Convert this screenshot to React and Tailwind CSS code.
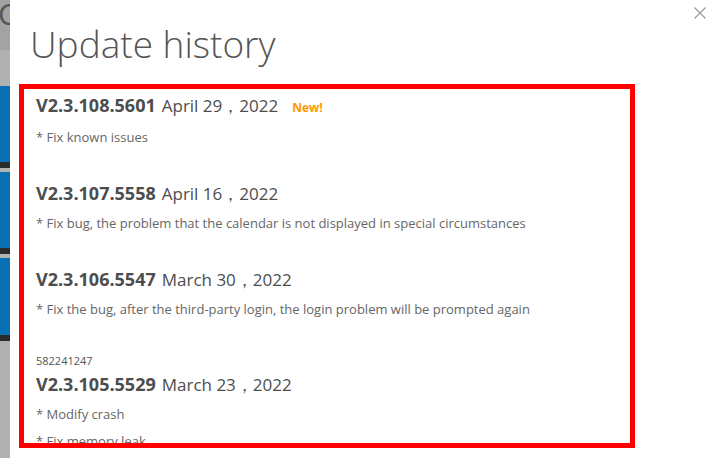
import React from 'react';

const updates = [
  {
    version: 'V2.3.108.5601',
    date: 'April 29，2022',
    isNew: true,
    notes: ['* Fix known issues'],
  },
  {
    version: 'V2.3.107.5558',
    date: 'April 16，2022',
    notes: ['* Fix bug, the problem that the calendar is not displayed in special circumstances'],
  },
  {
    version: 'V2.3.106.5547',
    date: 'March 30，2022',
    notes: ['* Fix the bug, after the third-party login, the login problem will be prompted again'],
  },
  {
    tag: '582241247',
    version: 'V2.3.105.5529',
    date: 'March 23，2022',
    notes: ['* Modify crash', '* Fix memory leak'],
  },
];

const SideStrip = () => (
  <div className="w-[10px] shrink-0 flex flex-col overflow-hidden bg-[#b1b1b1]">
    <div className="h-[50px] bg-[#a3a3a3] overflow-hidden">
      <span className="block -ml-[2px] -mt-[6px] text-[30px] leading-[40px] text-[#555]">C</span>
    </div>
    <div className="h-[36px]" />
    <div className="h-[76px] bg-[#0870b4]" />
    <div className="h-[6px] bg-[#2b2b2b]" />
    <div className="h-[4px]" />
    <div className="h-[76px] bg-[#0870b4]" />
    <div className="h-[6px] bg-[#2b2b2b]" />
    <div className="h-[4px]" />
    <div className="h-[77px] bg-[#0870b4]" />
    <div className="h-[6px] bg-[#2b2b2b]" />
  </div>
);

const App = () => {
  return (
    <div className="w-[719px] h-[458px] flex overflow-hidden bg-white font-['Open_Sans','Noto_Sans',sans-serif]">
      <SideStrip />
      <div className="flex-1 relative bg-white">
        <button className="absolute top-[6px] right-[12px] text-[#9a9a9a]">
          <svg width="14" height="14" viewBox="0 0 14 14" stroke="currentColor" strokeWidth="1.2" fill="none">
            <path d="M1.5 1.5 L12.5 12.5 M12.5 1.5 L1.5 12.5" />
          </svg>
        </button>
        <h1 className="pl-[20px] pt-[20px] text-[37px] leading-[48px] font-light text-[#555]">
          Update history
        </h1>
        <div className="ml-[9px] mt-[16px] w-[616px] h-[364px] border-[5px] border-[#ff0000] overflow-hidden px-[12px] pt-[4px]">
          {updates.map((u) => (
            <div key={u.version} className="mb-[34px]">
              {u.tag && (
                <div className="text-[11px] leading-[16px] text-[#555] mt-0 mb-[3px]">{u.tag}</div>
              )}
              <div className="flex items-baseline text-[18px] leading-[24px] text-[#4d4d4d]">
                <span className="font-bold">{u.version}</span>
                <span className="ml-[6px] text-[17px]">{u.date}</span>
                {u.isNew && (
                  <span className="ml-[14px] text-[12px] font-bold text-[#ff9900]">New!</span>
                )}
              </div>
              {u.notes.map((n) => (
                <p key={n} className="mt-[7px] text-[13px] leading-[20px] text-[#666]">
                  {n}
                </p>
              ))}
            </div>
          ))}
        </div>
      </div>
    </div>
  );
};

export default App;
